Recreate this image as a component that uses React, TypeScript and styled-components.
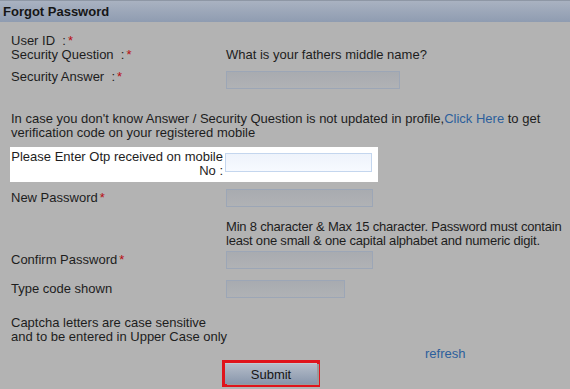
import styled, { createGlobalStyle } from "styled-components";

const Global = createGlobalStyle`
  html, body {
    margin: 0;
    padding: 0;
    background: #b3b3b3;
  }
  body {
    font-family: "Liberation Sans", Arial, sans-serif;
    font-size: 13px;
    color: #1d1d1d;
  }
`;

const Page = styled.div`
  width: 570px;
  height: 389px;
  overflow: hidden;
  background: #b3b3b3;
`;

const Header = styled.div`
  height: 21px;
  border-top: 1px solid #8e97a5;
  background: linear-gradient(#a9b2c1, #8f9cb1);
  font-weight: bold;
  font-size: 13px;
  line-height: 21px;
  padding-left: 3px;
  color: #161616;
`;

const Body = styled.div`
  display: flex;
  flex-direction: column;
  padding-left: 11px;
`;

const Row = styled.div<{ $top: number; $h?: number }>`
  display: grid;
  grid-template-columns: 215px 1fr;
  align-items: center;
  margin-top: ${(p) => p.$top}px;
  height: ${(p) => (p.$h ? `${p.$h}px` : "auto")};
  line-height: 14px;
  white-space: nowrap;
`;

const Label = styled.span<{ $up?: number }>`
  position: relative;
  top: ${(p) => (p.$up ? -p.$up : 0)}px;
`;

const Req = styled.span`
  color: #b80d12;
  margin-left: 2px;
`;

const Input = styled.div<{ $w: number; $h?: number }>`
  width: ${(p) => p.$w}px;
  height: ${(p) => p.$h ?? 17}px;
  box-sizing: border-box;
  border: 1px solid #9ca6b6;
  background: linear-gradient(#a8abb0, #b0b2b5);
`;

const Text = styled.div<{ $top: number; $indent?: number; $tight?: boolean }>`
  margin-top: ${(p) => p.$top}px;
  padding-left: ${(p) => p.$indent ?? 0}px;
  line-height: 14px;
  white-space: nowrap;
  letter-spacing: ${(p) => (p.$tight ? "-0.2px" : "normal")};
`;

const Link = styled.a`
  color: #2c5f9c;
  text-decoration: none;
`;

const OtpBox = styled.div`
  margin-top: 7px;
  margin-left: -1px;
  width: 368px;
  height: 35px;
  box-sizing: border-box;
  background: #ffffff;
  display: grid;
  grid-template-columns: 214px 1fr;
  align-items: start;
  padding-top: 3px;
`;

const OtpLabel = styled.div`
  text-align: right;
  line-height: 14px;
  padding-right: 1px;
  white-space: nowrap;
`;

const OtpInput = styled.div`
  margin-top: 3px;
  margin-left: 1px;
  width: 147px;
  height: 19px;
  box-sizing: border-box;
  border: 1px solid #c4d6ee;
  background: linear-gradient(#eef3fb, #f7faff);
`;

const Footer = styled.div`
  display: flex;
  flex-direction: column;
  margin-top: 3px;
`;

const Refresh = styled(Link)`
  margin-left: 414px;
  line-height: 14px;
`;

const SubmitFrame = styled.div`
  margin-top: -1px;
  margin-left: 211px;
  width: 98px;
  height: 27px;
  box-sizing: border-box;
  border: 3px solid #e0141c;
  display: flex;
`;

const SubmitButton = styled.button`
  flex: 1;
  border: none;
  border-top: 1px solid #c2c9d3;
  padding: 0;
  background: linear-gradient(#b5bdc9, #8896ab);
  font-family: "Liberation Sans", Arial, sans-serif;
  font-size: 13px;
  color: #151515;
  box-shadow: 2px 1px 0 #9a9a9a;
`;

export default function App() {
  return (
    <Page>
      <Global />
      <Header>Forgot Password</Header>
      <Body>
        <Row $top={12} $h={14}>
          <Label>
            User ID&nbsp; :<Req>*</Req>
          </Label>
          <span />
        </Row>
        <Row $top={0} $h={14}>
          <Label>
            Security Question&nbsp; :<Req>*</Req>
          </Label>
          <span>What is your fathers middle name?</span>
        </Row>
        <Row $top={9} $h={18}>
          <Label $up={3}>
            Security Answer&nbsp; :<Req>*</Req>
          </Label>
          <Input $w={174} $h={18} />
        </Row>
        <Text $top={23}>
          In case you don't know Answer / Security Question is not updated in
          profile,<Link href="#">Click Here</Link> to get
          <br />
          verification code on your registered mobile
        </Text>
        <OtpBox>
          <OtpLabel>
            Please Enter Otp received on mobile
            <br />
            No :
          </OtpLabel>
          <OtpInput />
        </OtpBox>
        <Row $top={7} $h={18}>
          <Label>
            New Password<Req>*</Req>
          </Label>
          <Input $w={147} $h={18} />
        </Row>
        <Text $top={13} $indent={215} $tight>
          Min 8 character &amp; Max 15 character. Password must contain
          <br />
          least one small &amp; one capital alphabet and numeric digit.
        </Text>
        <Row $top={3} $h={18}>
          <Label>
            Confirm Password<Req>*</Req>
          </Label>
          <Input $w={147} $h={18} />
        </Row>
        <Row $top={11} $h={18}>
          <Label>Type code shown</Label>
          <Input $w={119} $h={18} />
        </Row>
        <Text $top={18}>
          Captcha letters are case sensitive
          <br />
          and to be entered in Upper Case only
        </Text>
        <Footer>
          <Refresh href="#">refresh</Refresh>
          <SubmitFrame>
            <SubmitButton>Submit</SubmitButton>
          </SubmitFrame>
        </Footer>
      </Body>
    </Page>
  );
}
